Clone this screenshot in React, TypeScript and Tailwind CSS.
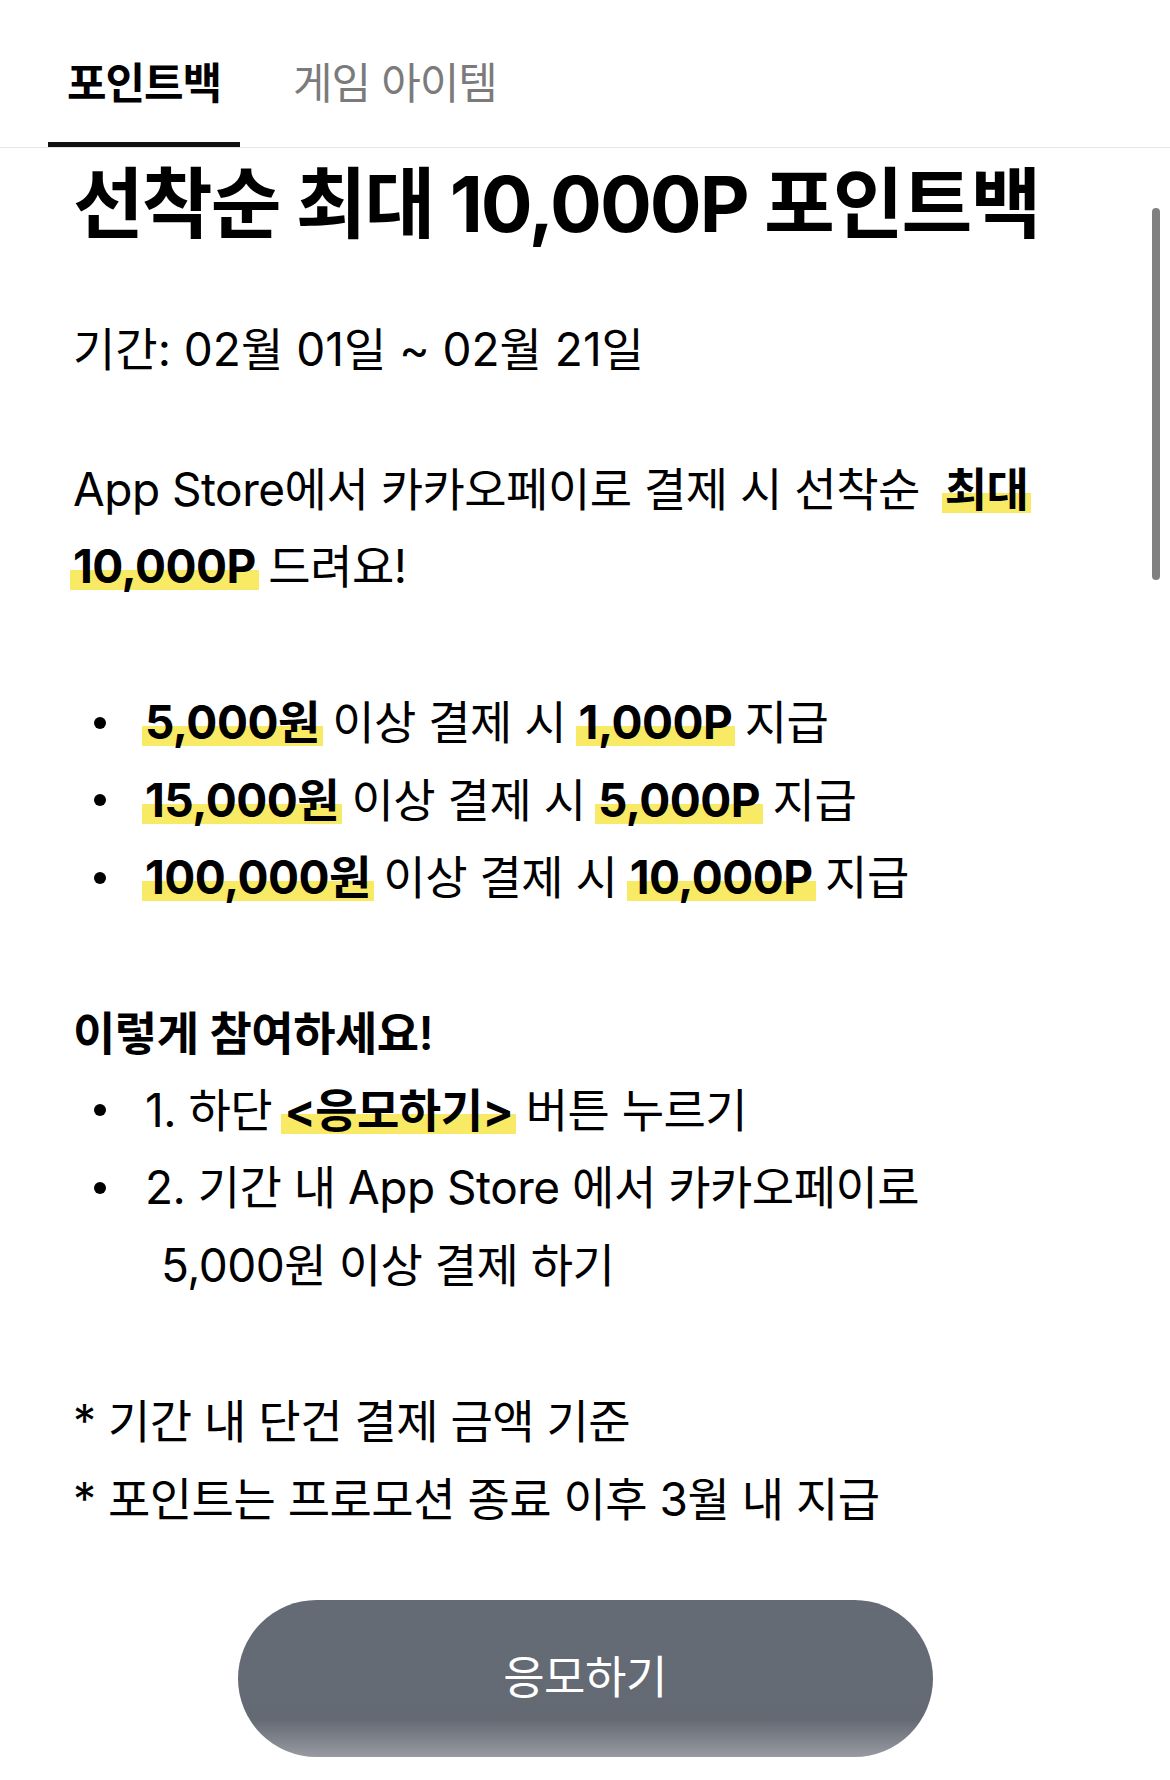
import React from "react";

const font = "font-['Inter','Noto_Sans_CJK_KR',sans-serif]";

function Mark({ children }: { children: React.ReactNode }) {
    return (
        <span className="font-bold px-[3px] -mx-[3px] bg-[linear-gradient(to_bottom,transparent_57%,#f8ea64_57%,#f8ea64_93%,transparent_93%)]">
            {children}
        </span>
    );
}

function Bullet({ children }: { children: React.ReactNode }) {
    return (
        <li className="flex items-center h-[77.5px]">
            <span className="w-[12px] h-[12px] rounded-full bg-black mr-[39px] shrink-0"></span>
            <span>{children}</span>
        </li>
    );
}

export default function App() {
    return (
        <div className={`relative w-[1170px] h-[1780px] bg-white text-black overflow-hidden ${font}`}>
            {/* tabs */}
            <div className="h-[148px] flex items-end border-b border-[#e6e6e6] pl-[48px]">
                <div className="w-[192px] h-full flex flex-col items-center">
                    <div className="flex-1 flex items-center pt-[24px] text-[43px] font-bold tracking-[-1px]">포인트백</div>
                    <div className="w-full h-[5px] bg-[#111]"></div>
                </div>
                <div className="ml-[53px] h-full flex items-center pb-[5px] pt-[24px] text-[43px] text-[#7b7b7b] tracking-[-1px]">
                    게임 아이템
                </div>
            </div>

            <div className="absolute right-[10px] top-[208px] w-[8px] h-[372px] rounded-full bg-[#808080]"></div>

            <div className="pl-[73px] pr-[40px] text-[46px] tracking-[-0.5px]">
                <h1 className="mt-[11px] text-[77px] leading-[90px] font-bold tracking-[-2px] whitespace-nowrap">
                    선착순 최대 10,000P 포인트백
                </h1>

                <p className="mt-[62px] leading-[77px] tracking-[0px]">기간: 02월 01일 ~ 02월 21일</p>

                <p className="mt-[63px] leading-[77px]">
                    App Store에서 카카오페이로 결제 시 선착순&nbsp; <Mark>최대</Mark>
                    <br />
                    <Mark>10,000P</Mark> 드려요!
                </p>

                <ul className="mt-[79px] -ml-[73px] pl-[94px]">
                    <Bullet>
                        <Mark>5,000원</Mark> 이상 결제 시 <Mark>1,000P</Mark> 지급
                    </Bullet>
                    <Bullet>
                        <Mark>15,000원</Mark> 이상 결제 시 <Mark>5,000P</Mark> 지급
                    </Bullet>
                    <Bullet>
                        <Mark>100,000원</Mark> 이상 결제 시 <Mark>10,000P</Mark> 지급
                    </Bullet>
                </ul>

                <p className="mt-[78px] leading-[77px] font-semibold">이렇게 참여하세요!</p>

                <ul className="-ml-[73px] pl-[94px]">
                    <Bullet>
                        1. 하단 <Mark>&lt;응모하기&gt;</Mark> 버튼 누르기
                    </Bullet>
                    <Bullet>2. 기간 내 App Store 에서 카카오페이로</Bullet>
                    <li className="h-[77px] flex items-center pl-[67px]">5,000원 이상 결제 하기</li>
                </ul>

                <p className="mt-[79px] leading-[77px]">* 기간 내 단건 결제 금액 기준</p>
                <p className="leading-[78px]">* 포인트는 프로모션 종료 이후 3월 내 지급</p>
            </div>

            <div className="mt-[62px] flex justify-center">
                <button className="w-[695px] h-[157px] rounded-full text-white text-[45px] tracking-[-0.5px] bg-[linear-gradient(to_bottom,#656b74_0%,#646a73_76%,#979aa1_100%)]">
                    응모하기
                </button>
            </div>
        </div>
    );
}
